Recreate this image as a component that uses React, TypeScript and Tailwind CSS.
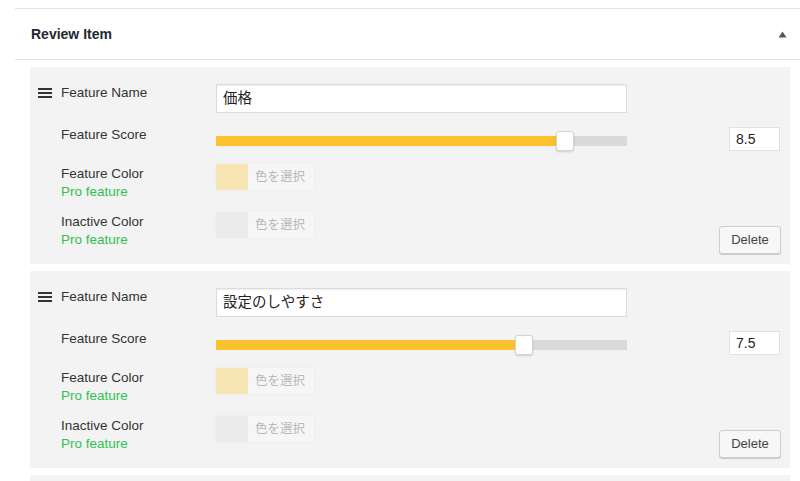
import React from "react";

const items = [
  { name: "価格", score: 8.5 },
  { name: "設定のしやすさ", score: 7.5 },
];

function Handle() {
  return (
    <svg width="14" height="12" viewBox="0 0 14 12" className="mr-[9px] mt-[2px] shrink-0">
      <rect x="0" y="1" width="14" height="2" fill="#333" />
      <rect x="0" y="5" width="14" height="2" fill="#333" />
      <rect x="0" y="9" width="14" height="2" fill="#333" />
    </svg>
  );
}

function ColorPicker({ swatch }: { swatch: string }) {
  return (
    <div className="flex h-[26px] w-[98px] items-center rounded-[2px] bg-[#f6f6f6] shadow-[0_0_0_1px_#efefef]">
      <div className="h-[26px] w-[32px] rounded-l-[2px]" style={{ background: swatch }} />
      <span className="pl-[7px] text-[12.5px] text-[#b9b9b9]">色を選択</span>
    </div>
  );
}

function Slider({ value }: { value: number }) {
  const pct = (value / 10) * 100;
  return (
    <div className="relative mt-[9px] h-[10px] w-[411px] bg-[#dadada]">
      <div className="absolute inset-y-0 left-0 bg-[#fcc22e]" style={{ width: `${pct}%` }} />
      <div
        className="absolute top-[-5px] h-[20px] w-[18px] -translate-x-1/2 rounded-[3px] border border-[#d4d4d4] bg-white shadow-[0_1px_2px_rgba(0,0,0,0.15)]"
        style={{ left: `${pct}%` }}
      />
    </div>
  );
}

function Label({ text, pro }: { text: string; pro?: boolean }) {
  return (
    <div className="pl-[23px] text-[13.5px] leading-[18px]">
      <div className="text-[#333]">{text}</div>
      {pro && <div className="text-[#30c152]">Pro feature</div>}
    </div>
  );
}

function Item({ name, score }: { name: string; score: number }) {
  return (
    <div className="bg-[#f3f3f3] pb-[10px] pl-[8px] pr-[10px] pt-[17px]">
      {/* name */}
      <div className="flex h-[29px] items-start">
        <div className="flex w-[178px] items-start pt-[1px] text-[13.5px] leading-[16px] text-[#333]">
          <Handle />
          <span>Feature Name</span>
        </div>
        <div className="flex h-[29px] w-[411px] items-center border border-[#dcdcdc] bg-white pl-[6px] text-[14.5px] text-[#222] shadow-[inset_0_1px_2px_rgba(0,0,0,0.07)]">
          {name}
        </div>
      </div>

      {/* score */}
      <div className="mt-[14px] flex h-[24px] items-start">
        <div className="-mt-[1px] w-[178px]">
          <Label text="Feature Score" />
        </div>
        <Slider value={score} />
        <div className="ml-auto flex h-[24px] w-[51px] items-center border border-[#e2e2e2] bg-white pl-[6px] text-[14px] text-[#222]">
          {score}
        </div>
      </div>

      {/* feature color */}
      <div className="mt-[13px] flex h-[48px] items-start">
        <div className="w-[178px] pt-[1px]">
          <Label text="Feature Color" pro />
        </div>
        <ColorPicker swatch="#f8e5b4" />
      </div>

      {/* inactive color */}
      <div className="flex h-[42px] items-start">
        <div className="w-[178px] pt-[1px]">
          <Label text="Inactive Color" pro />
        </div>
        <ColorPicker swatch="#ebebeb" />
        <button className="ml-auto mr-[-1px] mt-[14px] h-[28px] w-[62px] rounded-[3px] border border-[#cfcfcf] bg-[#f7f7f7] text-[13px] text-[#444] shadow-[0_1px_0_#cccccc]">
          Delete
        </button>
      </div>
    </div>
  );
}

export default function App() {
  return (
    <div
      className="h-[481px] w-[800px] overflow-hidden bg-white pt-[8px]"
      style={{ fontFamily: '"Liberation Sans", "Noto Sans CJK JP", sans-serif' }}
    >
      <div className="ml-[15px] border-t border-[#e5e5e5]">
        <div className="flex h-[51px] items-center justify-between border-b border-[#e5e5e5] pl-[16px] pr-[13px]">
          <h2 className="text-[14px] font-bold text-[#23282d]">Review Item</h2>
          <svg width="9" height="7" viewBox="0 0 9 7">
            <path d="M4.5 0.5 L8.5 6.5 L0.5 6.5 Z" fill="#555" />
          </svg>
        </div>
        <div className="ml-[15px] mr-[10px] flex flex-col gap-[7px] pt-[7px]">
          {items.map((it, i) => (
            <Item key={i} name={it.name} score={it.score} />
          ))}
          <div className="h-[40px] bg-[#f3f3f3]" />
        </div>
      </div>
    </div>
  );
}
